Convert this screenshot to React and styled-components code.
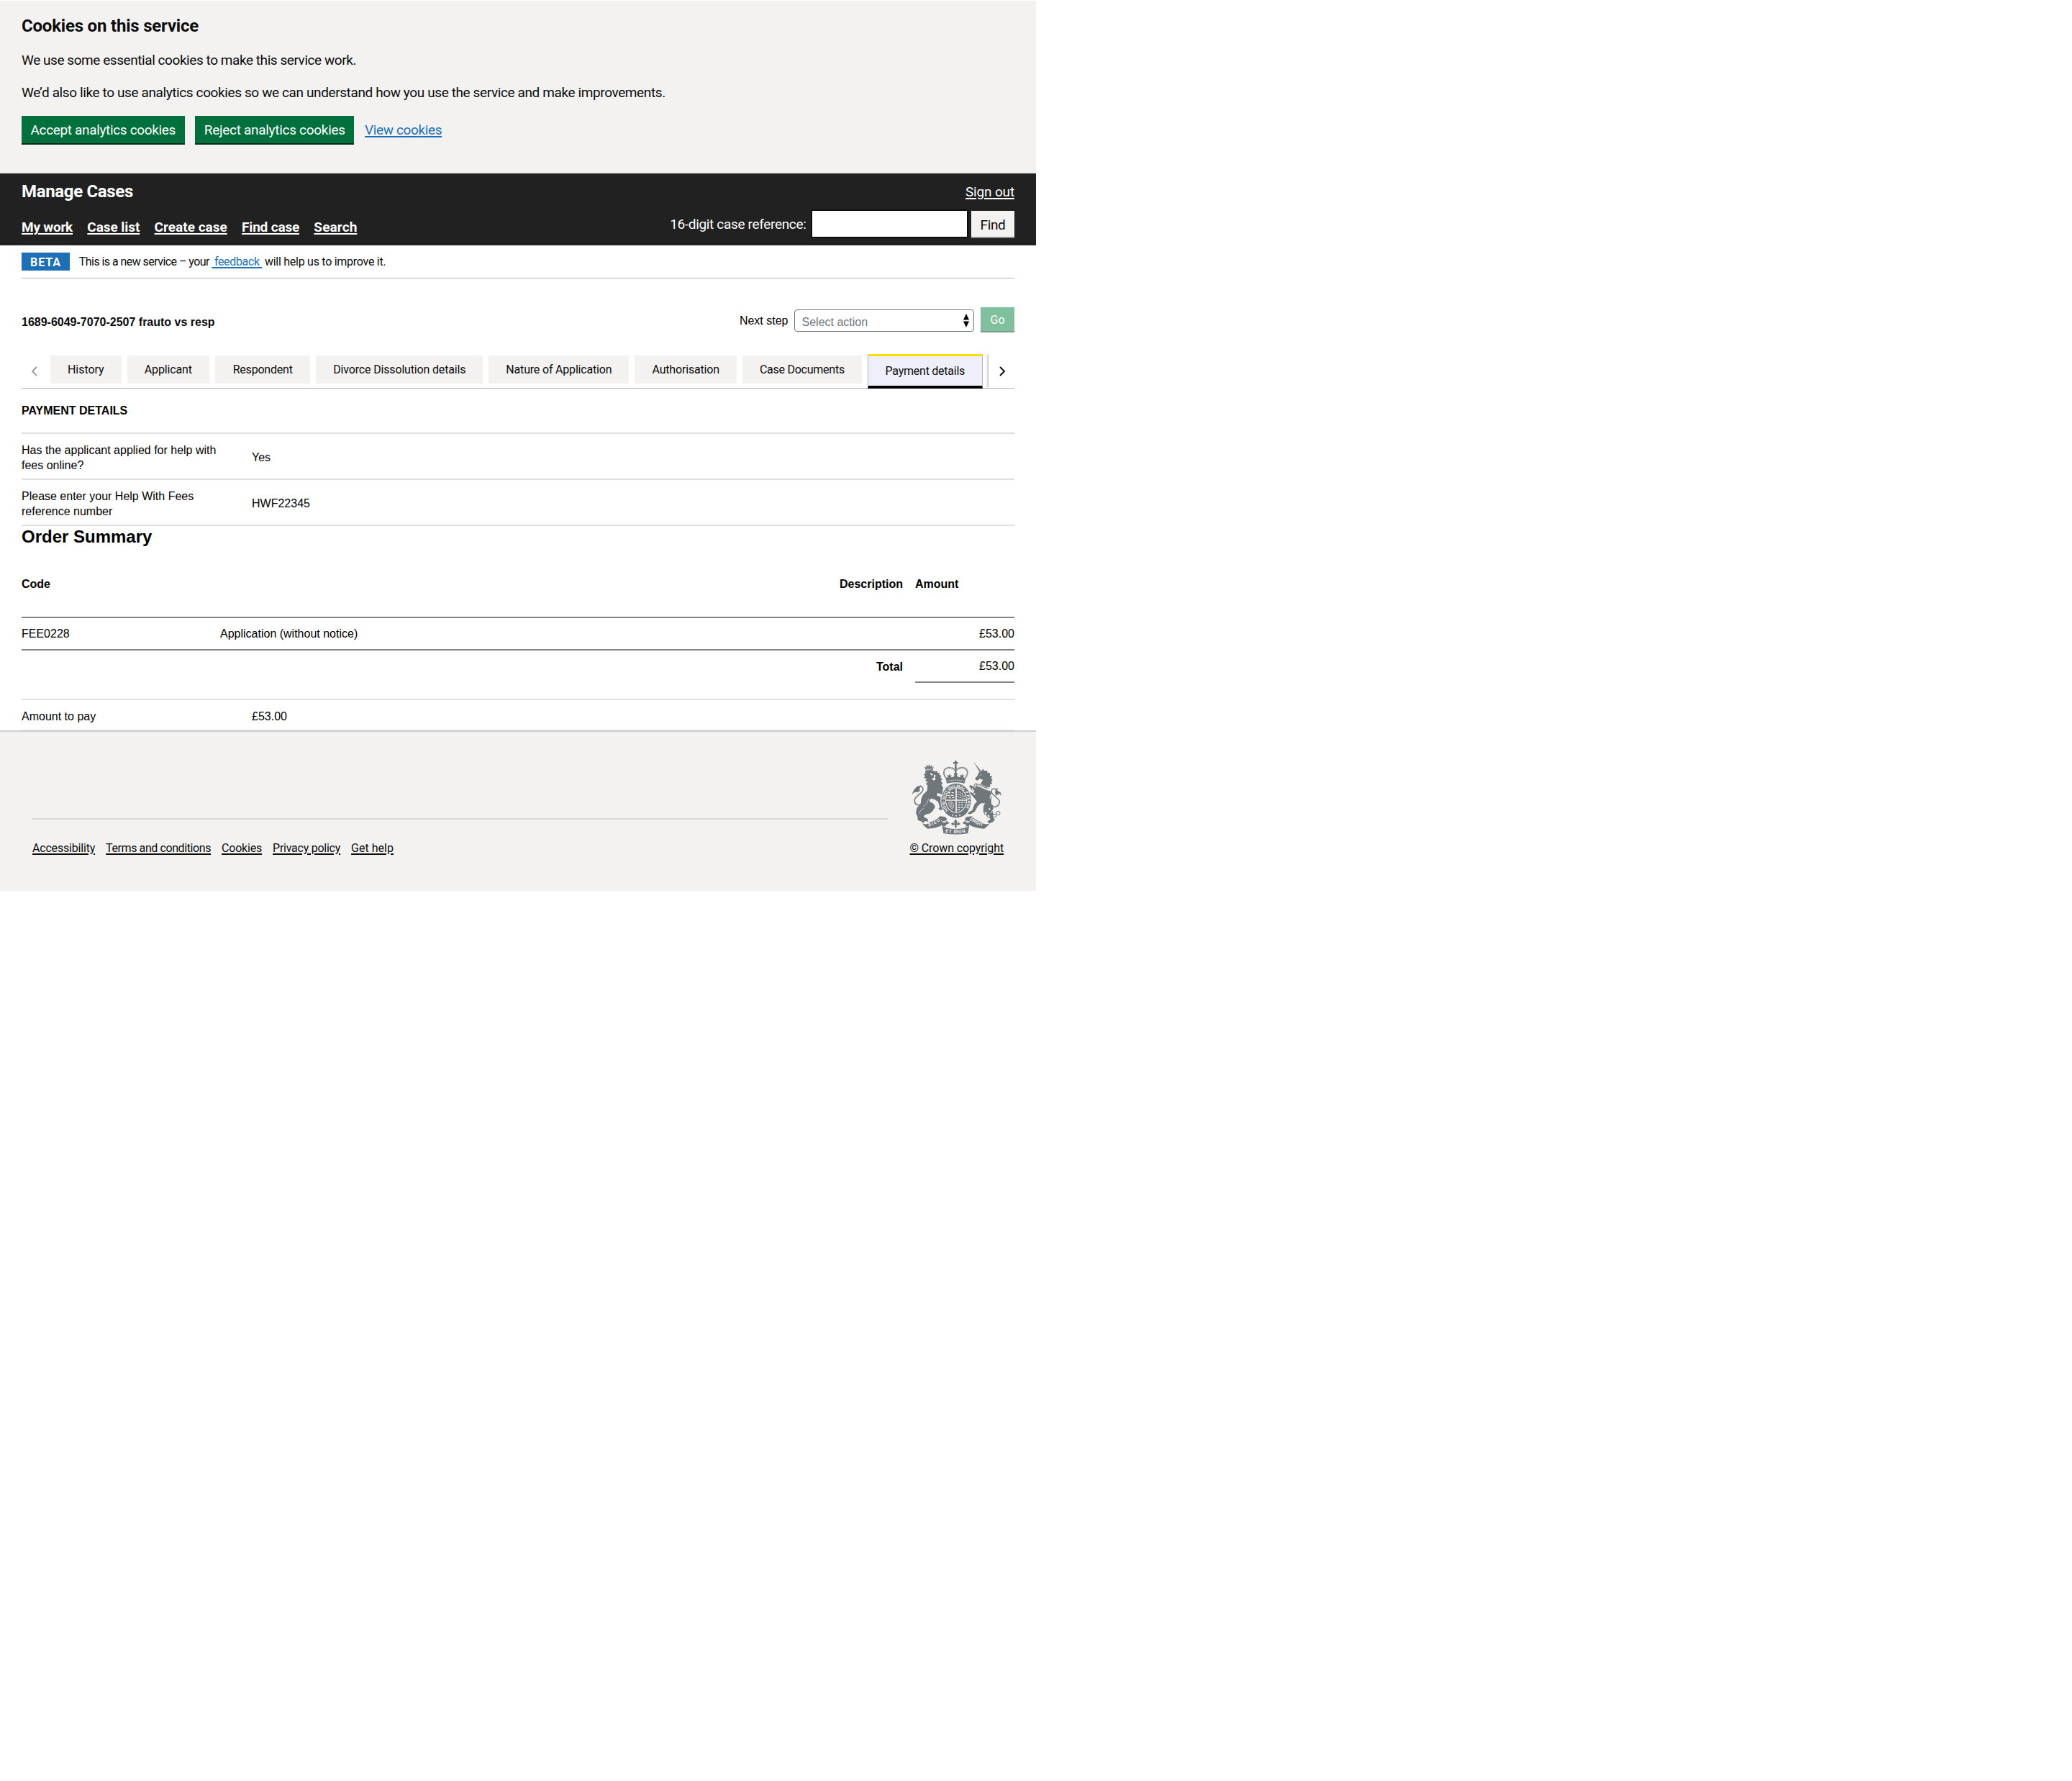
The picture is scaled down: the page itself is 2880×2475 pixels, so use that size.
import React from 'react';
import styled, { createGlobalStyle } from 'styled-components';

const transport = 'Roboto, "Open Sans", sans-serif';
const arial = '"Liberation Sans", Arial, sans-serif';

const GlobalStyle = createGlobalStyle`
  *, *::before, *::after { box-sizing: border-box; }
  html, body { margin: 0; background: #fff; }
  h1, h2, h3, p, ul { margin: 0; padding: 0; font-weight: inherit; }
`;

const Page = styled.div`
  width: 1440px;
  padding-top: 1px;
  font-family: ${transport};
  font-size: 19px;
  line-height: 25px;
  color: #0b0c0c;
`;

const Tracked = styled.span`
  letter-spacing: ${p => p.$ls || 0}px;
  white-space: pre;
`;

const Link = styled.a`
  color: ${p => p.$color || '#0b0c0c'};
  letter-spacing: ${p => p.$ls || 0}px;
  font-weight: ${p => (p.$bold ? 700 : 400)};
  text-decoration: underline;
  text-decoration-thickness: ${p => p.$thick || 1.5}px;
  text-underline-offset: 2px;
  white-space: pre;
`;

/* Cookie banner */
const CookieBanner = styled.section`
  display: flex;
  flex-direction: column;
  gap: 20px;
  height: 240px;
  padding: 20px 30px 0;
  background: #f3f2f1;
`;
const BannerTitle = styled.h2`
  font-size: 24px;
  line-height: 30px;
  font-weight: 700;
  letter-spacing: -0.2px;
`;
const BannerText = styled.p`
  letter-spacing: ${p => p.$ls}px;
`;
const BannerActions = styled.div`
  display: flex;
  gap: 14.8px;
  align-items: flex-start;
  > a { margin-top: 7px; }
`;
const GreenButton = styled.button`
  width: ${p => p.$w}px;
  height: 38px;
  padding: 0;
  border: 0;
  background: #00703c;
  box-shadow: 0 2px 0 #002d18;
  color: #fff;
  font: 400 19px/25px ${transport};
  letter-spacing: ${p => p.$ls}px;
`;

/* Header */
const Header = styled.header`
  display: flex;
  justify-content: space-between;
  height: 100px;
  padding: 10px 30px 0;
  background: #212121;
  color: #fff;
`;
const HeaderLeft = styled.div`
  display: flex;
  flex-direction: column;
  gap: 22px;
`;
const ServiceName = styled.h1`
  font-size: 24px;
  line-height: 30px;
  font-weight: 700;
  letter-spacing: -0.33px;
`;
const Nav = styled.nav`
  display: flex;
  gap: 20.3px;
`;
const HeaderRight = styled.div`
  display: flex;
  flex-direction: column;
  align-items: flex-end;
  padding-top: 3px;
  gap: 12px;
`;
const SearchForm = styled.div`
  display: flex;
  align-items: flex-start;
`;
const SearchLabel = styled.label`
  margin: 8px 6px 0 0;
  letter-spacing: -0.33px;
`;
const SearchInput = styled.input`
  width: 219px;
  height: 40px;
  margin-right: 4.5px;
  border: 2px solid #0b0c0c;
  background: #fff;
`;
const FindButton = styled.button`
  width: 60px;
  height: 36px;
  margin-top: 2px;
  padding: 2px 0 0;
  border: 0;
  background: #f3f2f1;
  box-shadow: 0 2px 0 #929191;
  color: #0b0c0c;
  font: 400 19px/25px ${transport};
  letter-spacing: -0.32px;
`;

/* Main */
const Main = styled.main`
  padding: 0 30px;
  font-family: ${arial};
  font-size: 16px;
  line-height: 21px;
  color: #000;
`;
const PhaseBanner = styled.div`
  display: flex;
  height: 46px;
  padding-top: 10px;
  border-bottom: 1px solid #b1b4b6;
  font: 400 16px/25px ${transport};
  color: #0b0c0c;
`;
const PhaseTag = styled.strong`
  width: 66.5px;
  height: 25px;
  margin-right: 13.3px;
  padding: 1px 0 0 12px;
  background: #1d70b8;
  color: #fff;
  line-height: 25px;
  letter-spacing: 0.95px;
`;
const CaseBar = styled.div`
  display: flex;
  justify-content: space-between;
  height: 105px;
  padding-top: 40px;
`;
const CaseTitle = styled.h2`
  margin-top: 10px;
  font-size: 16px;
  font-weight: 700;
  color: #0b0c0c;
`;
const NextStep = styled.div`
  display: flex;
  align-items: flex-start;
`;
const StepLabel = styled.label`
  margin: 8px 8px 0 0;
`;
const Select = styled.div`
  display: flex;
  justify-content: space-between;
  align-items: center;
  width: 250px;
  height: 31px;
  margin: 3px 9.5px 0 0;
  padding: 3px 6px 0 10px;
  border: 1px solid #6f777b;
  border-radius: 4px;
  color: #6f777b;
  svg { display: block; margin-top: -3px; }
`;
const GoButton = styled.button`
  width: 47px;
  height: 33px;
  padding: 3px 0 0;
  border: 0;
  background: #7fc19d;
  box-shadow: 0 2px 0 #81978c;
  color: #fff;
  font: 400 16px/20px ${transport};
`;

const TabBar = styled.div`
  display: flex;
  height: 48px;
  border-bottom: 1px solid #b1b4b6;
  font: 400 16px/20px ${transport};
  color: #0b0c0c;
`;
const TabArrow = styled.div`
  display: flex;
  width: ${p => (p.$next ? 36 : 40)}px;
  height: 47px;
  padding: 17px 0 0 ${p => (p.$next ? 15 : 12.5)}px;
  box-shadow: ${p => (p.$next ? '-1px 0 3px rgba(0,0,0,.35)' : 'none')};
  clip-path: inset(0 0 0 -5px);
`;
const TabList = styled.div`
  display: flex;
  flex: 1;
  gap: 8.1px;
`;
const Tab = styled.div`
  width: ${p => p.$w}px;
  height: ${p => (p.$active ? 48 : 39)}px;
  margin-top: ${p => (p.$active ? 0 : 2)}px;
  padding-top: ${p => (p.$active ? 11 : 10)}px;
  text-align: center;
  letter-spacing: ${p => p.$ls}px;
  background: ${p => (p.$active ? '#eeeffa' : '#f3f2f1')};
  ${p => p.$active && `
    border: solid;
    border-width: 3px 1px 4px;
    border-color: #ffdd00 #b1b4b6 #000;
  `}
`;

const SectionTitle = styled.h3`
  height: 61px;
  padding-top: 20px;
  font-size: 16px;
  font-weight: 700;
`;
const DetailRow = styled.div`
  display: grid;
  grid-template-columns: 320px 1fr;
  align-items: center;
  height: ${p => p.$h || 64}px;
  padding-top: ${p => (p.$h ? 4 : 3)}px;
  border-top: 2px solid #dee0e2;
  dt, dd { margin: 0; }
  dt { max-width: 285px; }
  dd { margin-top: ${p => (p.$h ? 0 : -1)}px; }
`;
const Details = styled.dl`
  margin: 0;
`;
const SummaryTitle = styled.h2`
  height: 56px;
  border-top: 2px solid #dee0e2;
  font-size: 24px;
  line-height: 29px;
  font-weight: 700;
`;
const OrderRow = styled.div`
  display: grid;
  grid-template-columns: 276px 949px 17px 138px;
  height: ${p => p.$h}px;
  padding-top: ${p => p.$pt}px;
  border-bottom: ${p => (p.$rule ? '2px solid #848484' : '0')};
`;
const Cell = styled.div`
  grid-column: ${p => p.$col};
  text-align: ${p => (p.$right ? 'right' : 'left')};
  font-weight: ${p => (p.$bold ? 700 : 400)};
  padding-top: ${p => p.$pt || 0}px;
`;
const TotalCell = styled(Cell)`
  height: 45px;
  padding-top: 11px;
  border-bottom: 2px solid #848484;
`;
const LastRule = styled.div`
  height: 1px;
  background: #dee0e2;
`;

/* Footer */
const Footer = styled.footer`
  display: flex;
  justify-content: space-between;
  height: 223px;
  padding: 39px 45px 0;
  border-top: 2px solid #cfd0d1;
  background: #f3f2f1;
  font-size: 16px;
  line-height: 20px;
`;
const FooterMeta = styled.div`
  width: 1189px;
  height: 2px;
  margin-top: 81px;
  background: #d9d8d8;
`;
const FooterLinks = styled.div`
  display: flex;
  gap: 15px;
  padding-top: 30px;
`;
const Copyright = styled.div`
  display: flex;
  flex-direction: column;
  align-items: center;
  svg { display: block; margin-bottom: 9px; }
`;

function Chevron({ flip, color }) {
  return (
    <svg width="9" height="14" viewBox="0 0 9 14" fill="none" stroke={color} strokeWidth="1.9">
      <path d={flip ? 'M1 1 7 7 1 13' : 'M8 1 2 7 8 13'} />
    </svg>
  );
}

function Crest() {
  const g = '#6f777b';
  const l = '#f3f2f1';
  return (
    <svg width="126" height="104" viewBox="140 76 378 312">
      <defs>
        <path id="motto" d="M293 287A47.5 56 0 1 1 359 287" />
        <path id="dieu" d="M212 354Q240 346 266 325" />
        <path id="etmon" d="M281 378Q324 386 368 378" />
        <path id="droit" d="M382 324Q408 346 440 354" />
      </defs>

      <g fill={g}>
        {/* royal crown */}
        <path d="M320 79h8v6h6v7h-6v9h-8v-9h-6v-7h6z" />
        <circle cx="324" cy="106" r="5" />
        <path d="M287 174 283 153Q324 144 365 153L361 174Q324 166 287 174z" />
        <path d="M285 155 292 147 288 139 295 141 297 133 300 141 307 139 304 149 315 147 319 139 316 133 324 127 332 133 329 139 333 147 344 149 341 139 348 141 351 133 353 141 360 139 356 147 363 155z" />
      </g>
      <g fill="none" stroke={g}>
        <path d="M287 155C262 128 279 104 303 109Q318 112 323 122Q330 112 345 109C369 104 386 128 361 155" strokeWidth="6" strokeDasharray="5 1.6" />
        <path d="M324 110V152" strokeWidth="8" strokeDasharray="5 1.5" />
      </g>
      <path d="M289 165Q324 155 359 165" fill="none" stroke={l} strokeWidth="2.5" strokeDasharray="5 3" />

      {/* lion */}
      <g fill={g}>
        <path d="M198 117 194 103 201 108 203 96 210 104 213 93 218 104 226 97 225 109 232 104 229 119Q213 113 198 117z" />
        <path d="M197 121Q220 114 239 124L249 122 248 130 258 130 255 138 265 142 260 148 268 157 262 162 270 174 264 179 272 192 269 205 277 214 286 226 276 222 278 238 268 225 261 218 248 214 246 225 260 229 270 246 274 269 278 281 263 286 252 280 258 273 251 251 235 240 220 237 214 249 231 258 239 272 229 288 218 299 197 304 190 313 207 322 210 333 196 331 190 339 179 332 166 327 165 313 158 298 162 277 179 258 180 240 187 222 205 204 207 183 200 176 208 167 197 164 203 155 191 150 198 143 190 137 198 132z" />
        <path d="M141 220 149 203 161 188 180 182 174 194 174 207 161 211 153 210z" />
      </g>
      <path d="M165 194Q184 179 188 197C190 212 164 222 155 237Q148 252 162 263Q172 269 182 257" fill="none" stroke={g} strokeWidth="4.5" />
      <path d="M201 112Q215 107 229 113" stroke={l} strokeWidth="2" fill="none" strokeDasharray="3 2" />
      <path d="M218 130 230 136 226 142 219 137zM234 137 241 141 237 150 241 157 233 162 223 155 232 151z" fill={l} />
      <path d="M170 301Q178 281 191 278M211 238Q206 262 188 270" fill="none" stroke={l} strokeWidth="2" />

      {/* unicorn */}
      <g fill={g}>
        <path d="M398 83 429 121 423 125z" />
        <path d="M422 126 434 120 437 113 443 121 455 121 457 129 468 131 466 141 476 145 472 154 478 160 472 167 477 175 467 178 468 189 461 190 426 181 432 168 438 159 423 154 417 162 407 160 406 152 415 142z" />
        <path d="M419 188 454 203 468 205 474 218 466 227 472 241 473 263 482 277 475 289 481 301 479 315 488 324 480 334 466 341 455 334 469 323 461 311 448 304 439 291 440 268 447 257 429 257 416 269 404 291 387 302 373 302 383 291 393 286 403 260 413 250 402 236 389 221 378 215 383 207 397 216 402 203 390 198 381 188 383 181 395 185 405 192 411 186z" />
        <path d="M492 226 488 212 491 198 499 193 498 204 511 211 516 227 506 216z" />
      </g>
      <circle cx="429" cy="139" r="2.5" fill={l} />
      <path d="M407 174Q433 181 459 197" fill="none" stroke={l} strokeWidth="7" />
      <path d="M407 173Q433 180 463 195M405 184Q430 190 456 205" fill="none" stroke={g} strokeWidth="2" />
      <path d="M410 178 417 182 423 179 430 187 437 184 443 192 451 191 456 199" fill="none" stroke={g} strokeWidth="3" />
      <path d="M495 200Q475 191 473 206C471 222 502 233 507 248Q507 266 491 271Q480 274 472 261" fill="none" stroke={g} strokeWidth="4.5" />
      <g fill={l} stroke={g} strokeWidth="3">
        <circle cx="406" cy="181" r="5" />
        <circle cx="394" cy="197" r="5" />
        <circle cx="402" cy="218" r="5" />
        <circle cx="449" cy="298" r="6" />
        <circle cx="461" cy="310" r="6" />
        <circle cx="486" cy="308" r="7" />
        <circle cx="501" cy="298" r="8" />
        <circle cx="469" cy="233" r="5" />
        <circle cx="465" cy="281" r="5" />
        <circle cx="474" cy="293" r="4" />
      </g>

      {/* garter and shield */}
      <ellipse cx="326" cy="246" rx="65" ry="75" fill={l} />
      <ellipse cx="326" cy="246" rx="62" ry="72" fill={g} />
      <ellipse cx="326" cy="244" rx="45" ry="53" fill={l} />
      <ellipse cx="326" cy="244" rx="42" ry="50" fill={g} />
      <text fill={l} fontFamily="Roboto, sans-serif" fontWeight="700" fontSize="16">
        <textPath href="#motto" textLength="238" lengthAdjust="spacingAndGlyphs">HONI SOIT QUI MAL Y PENSE</textPath>
      </text>
      <g stroke={l} fill="none">
        <path d="M285 244H368M326 194V294" strokeWidth="5" />
        <path d="M293 213H319M291 224H319M295 233H319" strokeWidth="4" strokeDasharray="10 4" />
        <path d="M335 207V236M343 209V238M351 214V237M359 224V238" strokeWidth="3" strokeDasharray="6 4" />
        <path d="M295 253Q313 247 316 260Q317 277 309 281L296 265z" strokeWidth="2" />
        <path d="M300 254 304 272M307 252 309 278" strokeWidth="2" />
        <path d="M334 254H363M334 264H360M333 274H354M332 283H345" strokeWidth="4" strokeDasharray="9 4" />
      </g>
      <g fill={l}>
        <circle cx="311" cy="306" r="3" />
        <circle cx="326" cy="309" r="3" />
        <circle cx="341" cy="306" r="3" />
      </g>

      {/* scroll */}
      <g fill={g}>
        <path d="M184 341Q201 350 219 335Q239 330 259 311L281 314 289 325Q281 333 269 331L277 343Q247 361 207 363Q192 354 184 341z" />
        <path d="M466 341Q449 350 431 335Q411 330 391 311L369 314 361 325Q369 333 381 331L373 343Q403 361 443 363Q458 354 466 341z" />
        <path d="M268 353Q270 335 288 331L298 341Q284 342 280 355Q324 372 370 355Q366 342 352 341L362 331Q380 335 380 353L375 382Q324 391 273 382z" />
        <path d="M324 323 331 333 328 342 337 336 343 342 337 349 328 346 328 358H320V346L311 349 305 342 311 336 320 342 317 333z" />
      </g>
      <path d="M263 328Q273 340 283 335M387 328Q377 340 367 335M274 354Q324 373 376 354" fill="none" stroke={l} strokeWidth="2.5" />
      <g fill={l} fontFamily="Roboto, sans-serif" fontWeight="700" fontSize="19">
        <text><textPath href="#dieu" textLength="54">DIEU</textPath></text>
        <text><textPath href="#etmon" textLength="84">ET MON</textPath></text>
        <text><textPath href="#droit" textLength="62" lengthAdjust="spacingAndGlyphs">DROIT</textPath></text>
      </g>
    </svg>
  );
}

const navItems = [
  ['My work', -0.24], ['Case list', -0.07], ['Create case', 0], ['Find case', -0.18], ['Search', 0.1],
];
const tabs = [
  ['History', 98.5, -0.06], ['Applicant', 114.5, -0.144], ['Respondent', 132, -0.21],
  ['Divorce Dissolution details', 232, -0.167], ['Nature of Application', 195, -0.186],
  ['Authorisation', 141.5, -0.17], ['Case Documents', 165.7, -0.25], ['Payment details', 160, -0.247, true],
];
const footerLinks = [
  ['Accessibility', -0.19], ['Terms and conditions', -0.405], ['Cookies', -0.2],
  ['Privacy policy', -0.25], ['Get help', 0.02],
];

export default function App() {
  return (
    <Page>
      <GlobalStyle />
      <CookieBanner>
        <BannerTitle>Cookies on this service</BannerTitle>
        <BannerText $ls={-0.44}>We use some essential cookies to make this service work.</BannerText>
        <BannerText $ls={-0.39}>We’d also like to use analytics cookies so we can understand how you use the service and make improvements.</BannerText>
        <BannerActions>
          <GreenButton $w={226.5} $ls={-0.346}>Accept analytics cookies</GreenButton>
          <GreenButton $w={221} $ls={-0.3}>Reject analytics cookies</GreenButton>
          <Link href="#" $color="#1d70b8" $ls={-0.375}>View cookies</Link>
        </BannerActions>
      </CookieBanner>

      <Header>
        <HeaderLeft>
          <ServiceName>Manage Cases</ServiceName>
          <Nav>
            {navItems.map(([label, ls]) => (
              <Link key={label} href="#" $color="#fff" $bold $thick={2} $ls={ls}>{label}</Link>
            ))}
          </Nav>
        </HeaderLeft>
        <HeaderRight>
          <Link href="#" $color="#fff" $ls={-0.16}>Sign out</Link>
          <SearchForm>
            <SearchLabel>16-digit case reference:</SearchLabel>
            <SearchInput />
            <FindButton>Find</FindButton>
          </SearchForm>
        </HeaderRight>
      </Header>

      <Main>
        <PhaseBanner>
          <PhaseTag>BETA</PhaseTag>
          <Tracked $ls={-0.555}>{'This is a new service – your '}</Tracked>
          <Link href="#" $color="#1d70b8" $ls={-0.35}>{' feedback '}</Link>
          <Tracked $ls={-0.27}>{' will help us to improve it.'}</Tracked>
        </PhaseBanner>

        <CaseBar>
          <CaseTitle>1689-6049-7070-2507 frauto vs resp</CaseTitle>
          <NextStep>
            <StepLabel>Next step</StepLabel>
            <Select>
              Select action
              <svg width="8" height="19" viewBox="0 0 8 19">
                <path d="M4 0 8 8.5H0zM0 10.500H8L4 19z" fill="#000" />
              </svg>
            </Select>
            <GoButton>Go</GoButton>
          </NextStep>
        </CaseBar>

        <TabBar>
          <TabArrow><Chevron color="#9a9b9b" /></TabArrow>
          <TabList>
            {tabs.map(([label, w, ls, active]) => (
              <Tab key={label} $w={w} $ls={ls} $active={active}>{label}</Tab>
            ))}
          </TabList>
          <TabArrow $next><Chevron flip color="#0b0c0c" /></TabArrow>
        </TabBar>

        <SectionTitle>PAYMENT DETAILS</SectionTitle>
        <Details>
          <DetailRow><dt>Has the applicant applied for help with fees online?</dt><dd>Yes</dd></DetailRow>
          <DetailRow><dt>Please enter your Help With Fees reference number</dt><dd>HWF22345</dd></DetailRow>
        </Details>

        <SummaryTitle>Order Summary</SummaryTitle>
        <OrderRow $h={74} $pt={16} $rule>
          <Cell $col={1} $bold>Code</Cell>
          <Cell $col={2} $right $bold>Description</Cell>
          <Cell $col={4} $bold>Amount</Cell>
        </OrderRow>
        <OrderRow $h={45} $pt={11} $rule>
          <Cell $col={1}>FEE0228</Cell>
          <Cell $col={2}>Application (without notice)</Cell>
          <Cell $col={4} $right>£53.00</Cell>
        </OrderRow>
        <OrderRow $h={67} $pt={0}>
          <Cell $col={2} $right $bold $pt={12}>Total</Cell>
          <TotalCell $col={4} $right>£53.00</TotalCell>
        </OrderRow>
        <Details>
          <DetailRow $h={43}><dt>Amount to pay</dt><dd>£53.00</dd></DetailRow>
        </Details>
        <LastRule />
      </Main>

      <Footer>
        <div>
          <FooterMeta />
          <FooterLinks>
            {footerLinks.map(([label, ls]) => <Link key={label} href="#" $ls={ls}>{label}</Link>)}
          </FooterLinks>
        </div>
        <Copyright>
          <Crest />
          <Link href="#" $ls={-0.118}>© Crown copyright</Link>
        </Copyright>
      </Footer>
    </Page>
  );
}
